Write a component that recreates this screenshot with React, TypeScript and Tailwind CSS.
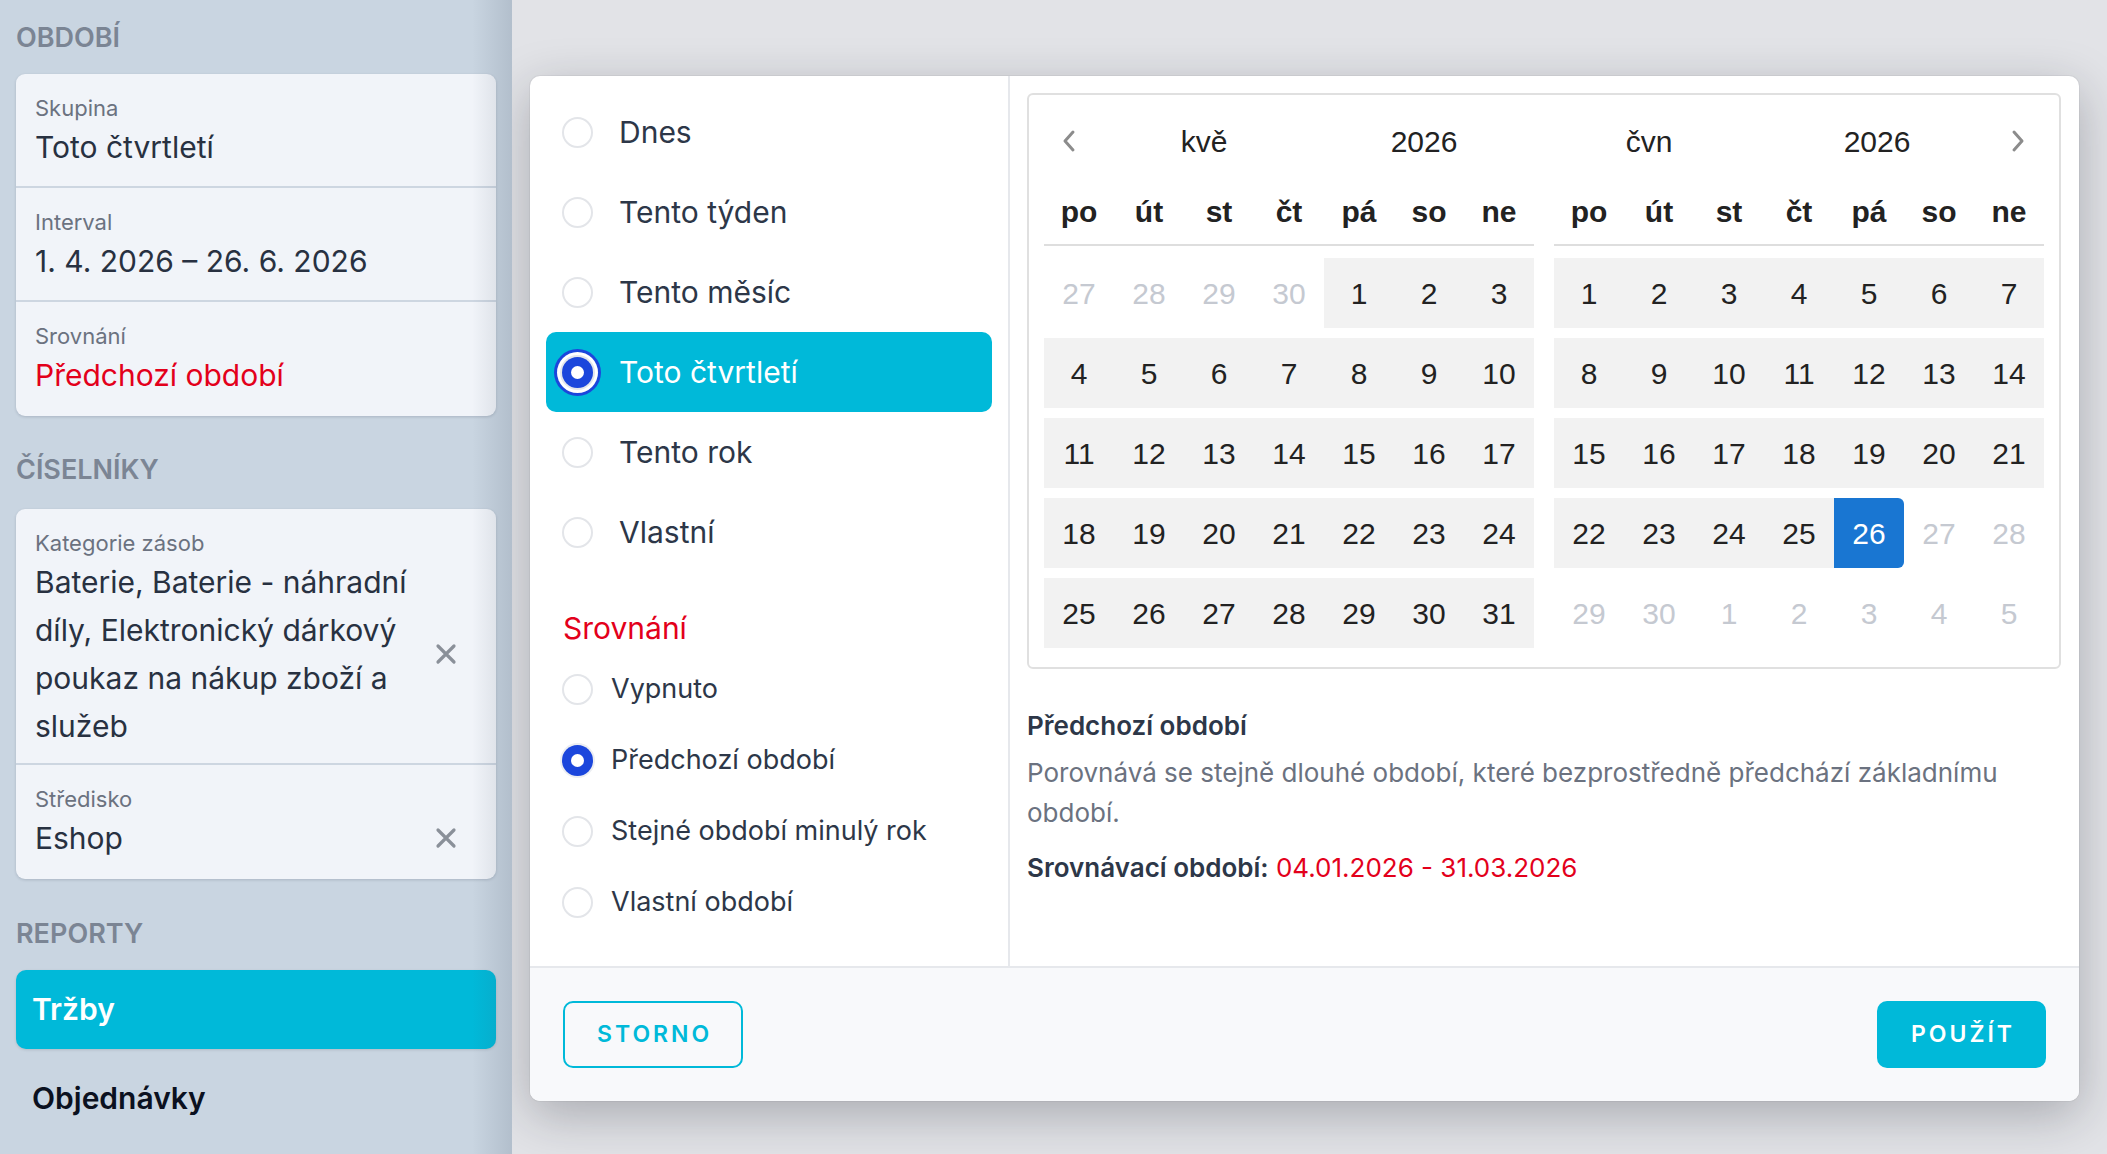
import React from 'react'

const PRESETS = ['Dnes', 'Tento týden', 'Tento měsíc', 'Toto čtvrtletí', 'Tento rok', 'Vlastní']
const ACTIVE_PRESET = 'Toto čtvrtletí'
const COMPARE = ['Vypnuto', 'Předchozí období', 'Stejné období minulý rok', 'Vlastní období']
const ACTIVE_COMPARE = 'Předchozí období'
const WEEKDAYS = ['po', 'út', 'st', 'čt', 'pá', 'so', 'ne']

type DayKind = 'muted' | 'range' | 'end'
type Day = { n: number; kind: DayKind }

// Květen 2026 – začíná v pátek, celý měsíc je v intervalu
const MAY: Day[] = [
  ...[27, 28, 29, 30].map((n) => ({ n, kind: 'muted' as DayKind })),
  ...Array.from({ length: 31 }, (_, i) => ({ n: i + 1, kind: 'range' as DayKind })),
]

// Červen 2026 – interval končí 26. 6.
const JUNE: Day[] = [
  ...Array.from({ length: 30 }, (_, i) => {
    const n = i + 1
    const kind: DayKind = n < 26 ? 'range' : n === 26 ? 'end' : 'muted'
    return { n, kind }
  }),
  ...[1, 2, 3, 4, 5].map((n) => ({ n, kind: 'muted' as DayKind })),
]

function CloseIcon() {
  return (
    <svg width="22" height="22" viewBox="0 0 22 22" className="shrink-0" aria-hidden="true">
      <path d="M3 3 L19 19 M19 3 L3 19" stroke="#8a9099" strokeWidth="3.2" strokeLinecap="round" />
    </svg>
  )
}

function Chevron({ dir }: { dir: 'left' | 'right' }) {
  return (
    <svg width="16" height="24" viewBox="0 0 16 24" aria-hidden="true">
      <path
        d={dir === 'left' ? 'M12 3 L4 12 L12 21' : 'M4 3 L12 12 L4 21'}
        fill="none"
        stroke="#8c8c8c"
        strokeWidth="3"
        strokeLinecap="round"
        strokeLinejoin="round"
      />
    </svg>
  )
}

function SideHeading({ children, className = '' }: { children: React.ReactNode; className?: string }) {
  return (
    <h3 className={`text-[27px] leading-[32px] font-semibold text-[#7b8594] ${className}`}>{children}</h3>
  )
}

function Sidebar() {
  return (
    <aside className="relative w-[512px] shrink-0 bg-[#c9d5e1] px-4 pt-[22px]">
      <SideHeading>OBDOBÍ</SideHeading>
      <div className="mt-[20px] overflow-hidden rounded-[9px] bg-[#f1f4f9] shadow-[0_1px_3px_rgba(30,40,60,0.18)]">
        <div className="border-b-2 border-[#cdd6e1] px-[19px] pt-[19px] pb-[15px]">
          <p className="text-[22px] leading-[30px] text-[#6b7280]">Skupina</p>
          <p className="text-[30px] leading-[48px] text-[#283141]">Toto čtvrtletí</p>
        </div>
        <div className="border-b-2 border-[#cdd6e1] px-[19px] pt-[19px] pb-[15px]">
          <p className="text-[22px] leading-[30px] text-[#6b7280]">Interval</p>
          <p className="text-[30px] leading-[48px] text-[#283141]">1. 4. 2026 – 26. 6. 2026</p>
        </div>
        <div className="px-[19px] pt-[19px] pb-[17px]">
          <p className="text-[22px] leading-[30px] text-[#6b7280]">Srovnání</p>
          <p className="text-[30px] leading-[48px] text-[#e3001b]">Předchozí období</p>
        </div>
      </div>

      <SideHeading className="mt-[38px]">ČÍSELNÍKY</SideHeading>
      <div className="mt-[23px] overflow-hidden rounded-[9px] bg-[#f1f4f9] shadow-[0_1px_3px_rgba(30,40,60,0.18)]">
        <div className="border-b-2 border-[#cdd6e1] pl-[19px] pr-[39px] pt-[19px] pb-[13px]">
          <p className="text-[22px] leading-[30px] text-[#6b7280]">Kategorie zásob</p>
          <div className="flex items-center justify-between">
            <p className="text-[30px] leading-[48px] text-[#283141]">
              Baterie, Baterie - náhradní
              <br />
              díly, Elektronický dárkový
              <br />
              poukaz na nákup zboží a
              <br />
              služeb
            </p>
            <CloseIcon />
          </div>
        </div>
        <div className="pl-[19px] pr-[39px] pt-[19px] pb-[17px]">
          <p className="text-[22px] leading-[30px] text-[#6b7280]">Středisko</p>
          <div className="flex items-center justify-between">
            <p className="text-[30px] leading-[48px] text-[#283141]">Eshop</p>
            <CloseIcon />
          </div>
        </div>
      </div>

      <SideHeading className="mt-[39px]">REPORTY</SideHeading>
      <div className="mt-[20px] flex h-[79px] items-center rounded-[10px] bg-[#00b9d9] px-4 text-[30px] font-semibold text-white shadow-[0_1px_3px_rgba(0,0,0,0.12)]">
        Tržby
      </div>
      <div className="mt-[10px] flex h-[79px] items-center px-4 text-[30px] font-semibold text-[#0b1120]">
        Objednávky
      </div>

      {/* stín podél pravého okraje */}
      <div className="pointer-events-none absolute inset-y-0 right-0 w-[40px] bg-gradient-to-r from-transparent to-[rgba(60,75,95,0.16)]" />
    </aside>
  )
}

function Radio({ checked, focused }: { checked: boolean; focused?: boolean }) {
  if (!checked) {
    return <span className="h-[31px] w-[31px] shrink-0 rounded-full border-2 border-[#e3e5e9] bg-white" />
  }
  return (
    <span
      className={`flex h-[31px] w-[31px] shrink-0 items-center justify-center rounded-full bg-[#1b46dc] ${
        focused
          ? 'shadow-[0_0_0_2px_#e3e6ec,0_0_0_5px_#ffffff,0_0_0_8px_#1b46dc]'
          : 'shadow-[0_0_0_2px_#eceef2]'
      }`}
    >
      <span className="h-[13px] w-[13px] rounded-full bg-white" />
    </span>
  )
}

function MonthGrid({ days, month, side }: { days: Day[]; month: string; side: 'left' | 'right' }) {
  return (
    <div className="w-[490px]">
      {side === 'left' ? (
        <div className="flex h-[62px] items-center text-[30px] text-[#222]">
          <span className="flex w-[50px] justify-center">
            <Chevron dir="left" />
          </span>
          <span className="w-[220px] text-center">{month}</span>
          <span className="w-[220px] text-center">2026</span>
        </div>
      ) : (
        <div className="flex h-[62px] items-center text-[30px] text-[#222]">
          <span className="w-[190px] text-center">{month}</span>
          <span className="w-[266px] text-center">2026</span>
          <span className="flex w-[34px] justify-start">
            <Chevron dir="right" />
          </span>
        </div>
      )}
      <div className="grid h-[74px] grid-cols-7 items-center border-b-2 border-[#dedede] pt-[6px] text-center text-[30px] font-bold text-[#222]">
        {WEEKDAYS.map((d) => (
          <span key={d}>{d}</span>
        ))}
      </div>
      <div className="mt-[12px] grid grid-cols-7 auto-rows-[70px] gap-y-[10px] text-[30px]">
        {days.map((d, i) => (
          <span
            key={i}
            className={`flex items-center justify-center ${
              d.kind === 'muted'
                ? 'text-[#c5c9d1]'
                : d.kind === 'end'
                  ? 'rounded-r-[6px] bg-[#1976d2] text-white'
                  : 'bg-[#f2f2f2] text-[#222]'
            }`}
          >
            {d.n}
          </span>
        ))}
      </div>
    </div>
  )
}

function PeriodDialog() {
  return (
    <div className="flex h-[1025px] w-[1549px] flex-col overflow-hidden rounded-[10px] bg-white shadow-[0_0_0_1px_rgba(0,0,0,0.04),0_14px_50px_rgba(20,25,35,0.28)]">
      <div className="flex h-[890px]">
        {/* předvolby */}
        <div className="w-[480px] shrink-0 border-r-2 border-[#e6e8ec] px-4 pt-4 text-[#2d3748]">
          {PRESETS.map((p) => {
            const active = p === ACTIVE_PRESET
            return (
              <div
                key={p}
                className={`flex h-[80px] items-center gap-[26px] rounded-[10px] pl-4 text-[30px] ${
                  active ? 'bg-[#00b9d9] text-white' : ''
                }`}
              >
                <Radio checked={active} focused />
                <span>{p}</span>
              </div>
            )
          })}

          <p className="mt-[36px] pl-[17px] text-[30px] leading-[40px] text-[#e3001b]">Srovnání</p>
          <div className="mt-[6px]">
            {COMPARE.map((c) => (
              <div key={c} className="flex h-[71px] items-center gap-[18px] pl-4 text-[27px]">
                <Radio checked={c === ACTIVE_COMPARE} />
                <span>{c}</span>
              </div>
            ))}
          </div>
        </div>

        {/* kalendář */}
        <div className="flex-1 pl-[17px] pr-[18px] pt-[17px]">
          <div className="rounded-[6px] border-2 border-[#e0e0e0] px-[15px] pt-[15px] pb-[19px] font-['Liberation_Sans',Arial,sans-serif]">
            <div className="flex gap-[20px]">
              <MonthGrid days={MAY} month="kvě" side="left" />
              <MonthGrid days={JUNE} month="čvn" side="right" />
            </div>
          </div>

          <p className="mt-[39px] text-[26px] leading-[36px] font-semibold text-[#2d3748]">Předchozí období</p>
          <p className="mt-[9px] text-[26px] leading-[40px] text-[#6b7280]">
            Porovnává se stejně dlouhé období, které bezprostředně předchází základnímu
            <br />
            období.
          </p>
          <p className="mt-[15px] text-[26px] leading-[40px]">
            <span className="font-semibold text-[#2d3748]">Srovnávací období:</span>{' '}
            <span className="text-[#e3001b]">04.01.2026 - 31.03.2026</span>
          </p>
        </div>
      </div>

      <div className="flex h-[135px] items-center justify-between border-t-2 border-[#e6e8ec] bg-[#f8f9fb] px-[33px]">
        <button className="flex h-[67px] items-center rounded-[10px] border-2 border-[#00b9d9] pl-[32px] pr-[29px] text-[23px] font-semibold tracking-[3px] text-[#00b9d9]">
          STORNO
        </button>
        <button className="flex h-[67px] items-center rounded-[10px] bg-[#00b9d9] pl-[34px] pr-[31px] text-[23px] font-semibold tracking-[3px] text-white">
          POUŽÍT
        </button>
      </div>
    </div>
  )
}

export default function App() {
  return (
    <div className="flex h-[1154px] w-full overflow-hidden font-['Inter',sans-serif]">
      <Sidebar />
      <main className="flex-1 bg-[#e2e3e7] pl-[18px] pt-[76px]">
        <PeriodDialog />
      </main>
    </div>
  )
}
